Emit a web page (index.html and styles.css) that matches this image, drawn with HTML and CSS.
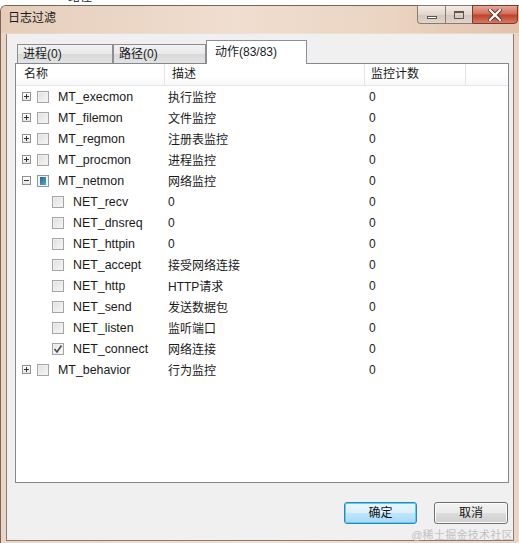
FILE: index.html
```html
<!DOCTYPE html>
<html>
<head>
<meta charset="utf-8">
<link rel="stylesheet" href="styles.css">
</head>
<body>
<div class="behind"><div class="behind-text">路径</div></div>
<div class="window">
  <div class="titlebar">
    <div class="title">日志过滤</div>
    <div class="caption-btns">
      <div class="cbtn min"><span class="min-ico"></span></div>
      <div class="cbtn max"><span class="max-ico"></span></div>
      <div class="cbtn close">
        <svg width="14" height="12" viewBox="0 0 14 12"><path d="M2 1 L12 11 M12 1 L2 11" stroke="#5a1e14" stroke-width="4" stroke-linecap="square"/><path d="M2 1 L12 11 M12 1 L2 11" stroke="#ffffff" stroke-width="2.4" stroke-linecap="square"/></svg>
      </div>
    </div>
  </div>
  <div class="client">
    <div class="tabs">
      <div class="tab t1">进程(0)</div>
      <div class="tab t2">路径(0)</div>
      <div class="tab active">动作(83/83)</div>
    </div>
    <div class="panel">
      <div class="header">
        <div class="hcell c1">名称</div>
        <div class="hcell c2">描述</div>
        <div class="hcell c3">监控计数</div>
        <div class="hcell c4"></div>
      </div>
      <div class="rows">
        <div class="row"><div class="name"><span class="exp plus"></span><span class="chk"></span><span class="lbl">MT_execmon</span></div><div class="desc">执行监控</div><div class="cnt">0</div></div>
        <div class="row"><div class="name"><span class="exp plus"></span><span class="chk"></span><span class="lbl">MT_filemon</span></div><div class="desc">文件监控</div><div class="cnt">0</div></div>
        <div class="row"><div class="name"><span class="exp plus"></span><span class="chk"></span><span class="lbl">MT_regmon</span></div><div class="desc">注册表监控</div><div class="cnt">0</div></div>
        <div class="row"><div class="name"><span class="exp plus"></span><span class="chk"></span><span class="lbl">MT_procmon</span></div><div class="desc">进程监控</div><div class="cnt">0</div></div>
        <div class="row"><div class="name"><span class="exp minus"></span><span class="chk partial"></span><span class="lbl">MT_netmon</span></div><div class="desc">网络监控</div><div class="cnt">0</div></div>
        <div class="row"><div class="name child"><span class="chk"></span><span class="lbl">NET_recv</span></div><div class="desc">0</div><div class="cnt">0</div></div>
        <div class="row"><div class="name child"><span class="chk"></span><span class="lbl">NET_dnsreq</span></div><div class="desc">0</div><div class="cnt">0</div></div>
        <div class="row"><div class="name child"><span class="chk"></span><span class="lbl">NET_httpin</span></div><div class="desc">0</div><div class="cnt">0</div></div>
        <div class="row"><div class="name child"><span class="chk"></span><span class="lbl">NET_accept</span></div><div class="desc">接受网络连接</div><div class="cnt">0</div></div>
        <div class="row"><div class="name child"><span class="chk"></span><span class="lbl">NET_http</span></div><div class="desc">HTTP请求</div><div class="cnt">0</div></div>
        <div class="row"><div class="name child"><span class="chk"></span><span class="lbl">NET_send</span></div><div class="desc">发送数据包</div><div class="cnt">0</div></div>
        <div class="row"><div class="name child"><span class="chk"></span><span class="lbl">NET_listen</span></div><div class="desc">监听端口</div><div class="cnt">0</div></div>
        <div class="row"><div class="name child"><span class="chk checked"><svg width="10" height="10" viewBox="0 0 10 10"><path d="M1.5 5 L4 8 L8.5 1.5" fill="none" stroke="#4a4a4a" stroke-width="1.6"/></svg></span><span class="lbl">NET_connect</span></div><div class="desc">网络连接</div><div class="cnt">0</div></div>
        <div class="row"><div class="name"><span class="exp plus"></span><span class="chk"></span><span class="lbl">MT_behavior</span></div><div class="desc">行为监控</div><div class="cnt">0</div></div>
      </div>
    </div>
    <div class="buttons">
      <div class="btn default">确定</div>
      <div class="btn">取消</div>
    </div>
    <div class="watermark">@稀土掘金技术社区</div>
  </div>
</div>
</body>
</html>
```
FILE: styles.css
```css
* { box-sizing: border-box; }
html, body { margin: 0; padding: 0; }
body {
  width: 519px;
  height: 543px;
  overflow: hidden;
  background: #ffffff;
  font-family: "Liberation Sans", "Noto Sans CJK SC", sans-serif;
  font-size: 12px;
  color: #1a1a1a;
}
.behind {
  height: 5px;
  overflow: hidden;
  background: #ffffff;
}
.behind-text {
  margin-top: -10px;
  padding-left: 68px;
  font-size: 12px;
  line-height: 14px;
  color: #222;
}
.window {
  height: 538px;
  display: flex;
  flex-direction: column;
  border-top: 1px solid #7a6456;
  border-left: 1px solid #7a6456;
  border-top-left-radius: 6px;
  background: linear-gradient(90deg, #e9d6c8 0%, #f0e2d6 50%, #ead6c6 100%);
}
.titlebar {
  height: 27px;
  display: flex;
  justify-content: space-between;
  align-items: flex-start;
  padding-left: 7px;
  padding-right: 1px;
  background: linear-gradient(90deg, #e6cdba 0%, #f0ded0 45%, #ebd4c2 75%, #e1c3ac 100%);
  border-top-left-radius: 5px;
}
.title {
  padding-top: 5px;
  font-size: 12px;
  line-height: 14px;
  color: #1a1a1a;
}
.caption-btns {
  display: flex;
  margin-top: -1px;
  height: 19px;
}
.cbtn {
  height: 19px;
  display: flex;
  align-items: center;
  justify-content: center;
  border: 1px solid #8c7a6f;
}
.min {
  width: 28px;
  border-right: none;
  border-bottom-left-radius: 4px;
  background: linear-gradient(#f3ece7, #e2d6ce 50%, #d4c6bc 51%, #e0d4cc);
}
.max {
  width: 27px;
  border-right: none;
  background: linear-gradient(#f3ece7, #e2d6ce 50%, #d4c6bc 51%, #e0d4cc);
}
.close {
  width: 46px;
  border-color: #7a3a2e;
  border-bottom-right-radius: 4px;
  background: linear-gradient(#e8a898, #d0705c 45%, #c2432c 55%, #d57a62);
}
.min-ico {
  width: 10px;
  height: 3px;
  margin-top: 6px;
  border: 1px solid #5d5550;
  background: #ffffff;
}
.max-ico {
  width: 10px;
  height: 8px;
  border: 1px solid #5d5550;
  border-top-width: 2px;
  background: transparent;
}
.client {
  flex: 1;
  margin: 1px 5px 2px 5px;
  border: 1px solid #8e7c71;
  border-top: none;
  background: #f0f0f0;
  position: relative;
  display: flex;
  flex-direction: column;
}
.tabs {
  display: flex;
  align-items: flex-end;
  margin-top: 6px;
  padding-left: 10px;
  height: 23px;
  position: relative;
  z-index: 2;
}
.tab {
  height: 19px;
  border: 1px solid #8c8e94;
  border-bottom: none;
  background: linear-gradient(#f2f2f2, #e9e9e9 50%, #d9d9d9 51%, #e3e3e3);
  padding-left: 5px;
  line-height: 18px;
  font-size: 12px;
  color: #1a1a1a;
}
.t1 { width: 96px; }
.t2 { width: 93px; margin-left: 0; }
.active {
  width: 101px;
  height: 24px;
  margin-left: 0;
  margin-bottom: -1px;
  background: #ffffff;
  padding-left: 8px;
  line-height: 22px;
}
.panel {
  margin-left: 8px;
  width: 494px;
  height: 420px;
  border: 1px solid #828790;
  background: #ffffff;
}
.header {
  display: grid;
  grid-template-columns: 149px 200px 101px 1fr;
  height: 22px;
  border-bottom: 1px solid #e5e5e5;
  background: linear-gradient(#ffffff, #ffffff 60%, #f7f8fa);
}
.hcell {
  border-right: 1px solid #e5e5e5;
  line-height: 21px;
  font-size: 12px;
  color: #1a1a1a;
}
.hcell.c1 { padding-left: 8px; }
.hcell.c2 { padding-left: 7px; }
.hcell.c3 { padding-left: 6px; }
.hcell.c4 { border-right: none; }
.rows { display: flex; flex-direction: column; }
.row {
  display: grid;
  grid-template-columns: 149px 200px 1fr;
  height: 21px;
  align-items: center;
}
.name {
  display: flex;
  align-items: center;
  padding-left: 6px;
}
.name.child { padding-left: 36px; }
.exp {
  width: 9px;
  height: 9px;
  border: 1px solid #919191;
  background: linear-gradient(#ffffff, #e6e6e6);
  position: relative;
  margin-right: 6px;
}
.exp::before {
  content: "";
  position: absolute;
  left: 1px;
  top: 3px;
  width: 5px;
  height: 1px;
  background: #333;
}
.plus::after {
  content: "";
  position: absolute;
  left: 3px;
  top: 1px;
  width: 1px;
  height: 5px;
  background: #333;
}
.chk {
  width: 12px;
  height: 12px;
  border: 1px solid #a5a5a5;
  background: linear-gradient(135deg, #dedede, #f7f7f7);
  box-shadow: inset 0 0 0 1px #f0f0f0;
  display: flex;
  align-items: center;
  justify-content: center;
}
.chk.partial {
  border-color: #8a9aa6;
  background: #f4f4f4;
  box-shadow: none;
  padding: 2px;
}
.chk.partial::after {
  content: "";
  width: 8px;
  height: 8px;
  background: linear-gradient(135deg, #1e6a9a, #4fa8c8);
  display: block;
}
.chk.checked { background: linear-gradient(135deg, #e6e6e6, #f8f8f8); }
.lbl {
  margin-left: 9px;
  font-size: 12.4px;
  white-space: nowrap;
}
.desc { padding-left: 3px; white-space: nowrap; }
.cnt { padding-left: 4px; }
.buttons {
  display: flex;
  justify-content: flex-end;
  gap: 17px;
  margin-top: 19px;
  padding-right: 5px;
}
.btn {
  width: 74px;
  height: 22px;
  border: 1px solid #707070;
  border-radius: 3px;
  background: linear-gradient(#f2f2f2, #ebebeb 50%, #dddddd 51%, #cfcfcf);
  box-shadow: inset 0 0 0 1px #fcfcfc;
  text-align: center;
  line-height: 20px;
  font-size: 12px;
  color: #111;
}
.btn.default {
  width: 73px;
  border-color: #3c7fb1;
  box-shadow: inset 0 0 0 1px #48d7fb;
  background: linear-gradient(#eaf6fd, #d9f0fc 50%, #bee6fd 51%, #a7d9f5);
}
.watermark {
  position: absolute;
  right: 0;
  bottom: -2px;
  font-size: 11px;
  line-height: 13px;
  color: #c2c2c2;
  white-space: nowrap;
  letter-spacing: 0.3px;
}
```
